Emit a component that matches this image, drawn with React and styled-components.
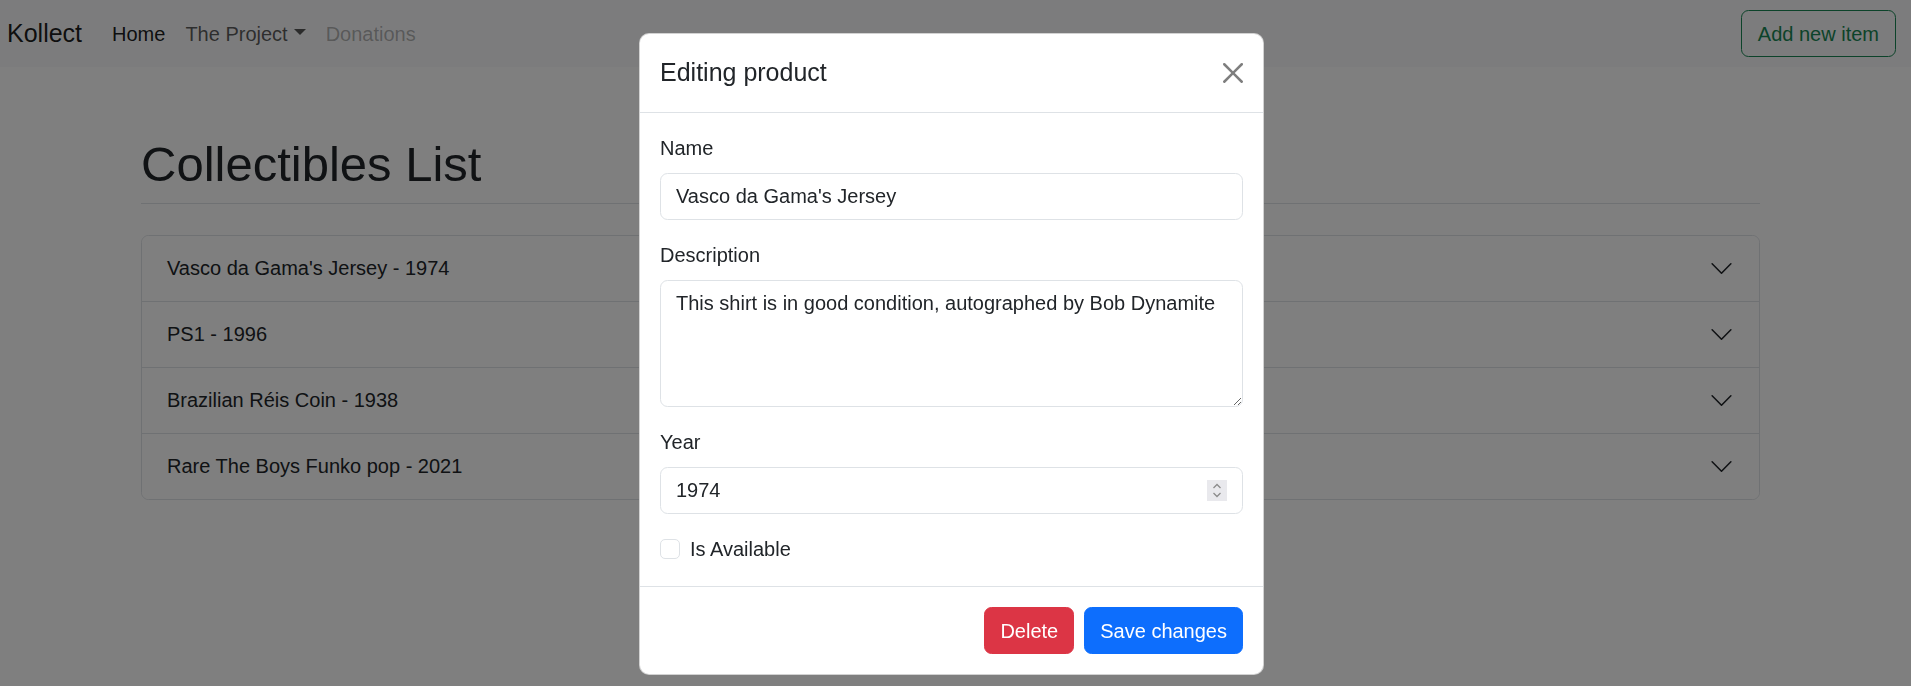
import React from "react";
import styled, { createGlobalStyle } from "styled-components";

const GlobalStyle = createGlobalStyle`
  *, *::before, *::after { box-sizing: border-box; }
  html, body { margin: 0; padding: 0; }
  body {
    font-family: "Liberation Sans", Arial, sans-serif;
    font-size: 20px;
    line-height: 1.5;
    color: #212529;
    background: #fff;
  }
`;

const Page = styled.div`
  min-height: 686px;
`;

const NavBar = styled.nav`
  display: flex;
  align-items: center;
  justify-content: space-between;
  height: 67px;
  padding: 0 15px 0 7px;
  background: #f8f9fa;
`;

const NavLeft = styled.div`
  display: flex;
  align-items: center;
`;

const Brand = styled.a`
  font-size: 25px;
  line-height: 37.5px;
  color: rgba(0, 0, 0, 0.9);
  text-decoration: none;
  margin-right: 20px;
`;

const NavList = styled.ul`
  list-style: none;
  margin: 0;
  padding: 0;
  display: flex;
  align-items: center;
`;

const linkColors = {
  active: "rgba(0, 0, 0, 0.9)",
  normal: "rgba(0, 0, 0, 0.65)",
  disabled: "rgba(0, 0, 0, 0.3)",
};

const NavLink = styled.a`
  display: flex;
  align-items: center;
  padding: 0 10px;
  line-height: 30px;
  color: ${(p) => linkColors[p.$state || "normal"]};
  text-decoration: none;
`;

const Caret = styled.span`
  display: inline-block;
  margin-left: 6px;
  margin-top: -3px;
  border-top: 6px solid currentColor;
  border-left: 6px solid transparent;
  border-right: 6px solid transparent;
`;

const OutlineButton = styled.button`
  font-family: inherit;
  font-size: 20px;
  line-height: 30px;
  padding: 7.5px 16px;
  color: #198754;
  background: transparent;
  border: 1px solid #198754;
  border-radius: 7.5px;
`;

const Main = styled.main`
  padding: 0 151px 0 141px;
`;

const Title = styled.h1`
  margin: 68px 0 0;
  font-size: 49px;
  font-weight: 400;
  line-height: 1.2;
  padding-bottom: 9px;
  border-bottom: 1px solid #dee2e6;
`;

const Accordion = styled.div`
  margin-top: 31px;
  border: 1px solid #dee2e6;
  border-radius: 7.5px;
  overflow: hidden;
`;

const AccordionRow = styled.div`
  display: flex;
  align-items: center;
  justify-content: space-between;
  padding: 17.5px 25px;
  line-height: 30px;
  background: #fff;
  & + & {
    border-top: 1px solid #dee2e6;
  }
`;

const Overlay = styled.div`
  position: fixed;
  inset: 0;
  background: rgba(0, 0, 0, 0.5);
  display: flex;
  justify-content: center;
  align-items: flex-start;
  padding: 33px 8px 0 0;
`;

const Modal = styled.div`
  width: 625px;
  background: #fff;
  border: 1px solid rgba(0, 0, 0, 0.175);
  border-radius: 10px;
`;

const ModalHeader = styled.div`
  display: flex;
  align-items: center;
  justify-content: space-between;
  padding: 20px;
  border-bottom: 1px solid #dee2e6;
`;

const ModalTitle = styled.h5`
  margin: 0;
  font-size: 25px;
  line-height: 1.5;
  font-weight: 400;
`;

const CloseButton = styled.button`
  display: flex;
  width: 20px;
  height: 20px;
  padding: 0;
  border: 0;
  background: none;
  opacity: 0.5;
`;

const ModalBody = styled.div`
  padding: 20px;
`;

const Field = styled.div`
  margin-bottom: 20px;
`;

const Label = styled.label`
  display: block;
  margin-bottom: 10px;
  line-height: 30px;
`;

const TextInput = styled.input`
  display: block;
  width: 100%;
  height: 47px;
  padding: 7.5px 15px;
  font-family: inherit;
  font-size: 20px;
  line-height: 30px;
  color: #212529;
  background: #fff;
  border: 1px solid #dee2e6;
  border-radius: 7.5px;
  outline: none;
`;

const TextArea = styled.textarea`
  display: block;
  width: 100%;
  height: 127px;
  padding: 7.5px 15px;
  font-family: inherit;
  font-size: 20px;
  line-height: 30px;
  color: #212529;
  background: #fff;
  border: 1px solid #dee2e6;
  border-radius: 7.5px;
  outline: none;
  resize: vertical;
`;

const NumberBox = styled.div`
  display: flex;
  align-items: center;
  height: 47px;
  padding: 0 15px;
  border: 1px solid #dee2e6;
  border-radius: 7.5px;
  background: #fff;
`;

const BareInput = styled.input`
  flex: 1;
  min-width: 0;
  padding: 0;
  border: 0;
  outline: none;
  background: transparent;
  font-family: inherit;
  font-size: 20px;
  line-height: 30px;
  color: #212529;
`;

const CheckRow = styled.div`
  display: flex;
  align-items: center;
  gap: 10px;
  min-height: 30px;
  margin-bottom: 2.5px;
`;

const CheckBox = styled.input`
  appearance: none;
  margin: 0;
  width: 20px;
  height: 20px;
  border: 1px solid #dee2e6;
  border-radius: 5px;
  background: #fff;
`;

const ModalFooter = styled.div`
  display: flex;
  justify-content: flex-end;
  gap: 10px;
  padding: 20px;
  border-top: 1px solid #dee2e6;
`;

const btnColors = {
  danger: "#dc3545",
  primary: "#0d6efd",
};

const Button = styled.button`
  font-family: inherit;
  font-size: 20px;
  line-height: 30px;
  padding: 7.5px 15px;
  color: #fff;
  background: ${(p) => btnColors[p.$variant]};
  border: 1px solid ${(p) => btnColors[p.$variant]};
  border-radius: 7.5px;
`;

const Chevron = () => (
  <svg width="25" height="25" viewBox="0 0 16 16" aria-hidden="true">
    <path
      d="M2 5L8 11L14 5"
      fill="none"
      stroke="#212529"
      strokeLinecap="round"
      strokeLinejoin="round"
    />
  </svg>
);

const CloseIcon = () => (
  <svg width="20" height="20" viewBox="0 0 16 16" aria-hidden="true">
    <path
      fill="#000"
      d="M.293.293a1 1 0 0 1 1.414 0L8 6.586 14.293.293a1 1 0 1 1 1.414 1.414L9.414 8l6.293 6.293a1 1 0 0 1-1.414 1.414L8 9.414l-6.293 6.293a1 1 0 0 1-1.414-1.414L6.586 8 .293 1.707a1 1 0 0 1 0-1.414"
    />
  </svg>
);

const Spinner = () => (
  <svg width="20" height="21" viewBox="0 0 20 21" aria-hidden="true">
    <rect x="0" y="0" width="20" height="21" fill="#e9e9ed" />
    <polyline points="6.5,8 10,4.5 13.5,8" fill="none" stroke="#8c8c8c" strokeWidth="1.3" />
    <polyline points="6.5,13 10,16.5 13.5,13" fill="none" stroke="#8c8c8c" strokeWidth="1.3" />
  </svg>
);

const items = [
  "Vasco da Gama's Jersey - 1974",
  "PS1 - 1996",
  "Brazilian Réis Coin - 1938",
  "Rare The Boys Funko pop - 2021",
];

export default function App() {
  return (
    <Page>
      <GlobalStyle />
      <NavBar>
        <NavLeft>
          <Brand href="#">Kollect</Brand>
          <NavList>
            <li>
              <NavLink href="#" $state="active">Home</NavLink>
            </li>
            <li>
              <NavLink href="#">
                The Project
                <Caret />
              </NavLink>
            </li>
            <li>
              <NavLink $state="disabled">Donations</NavLink>
            </li>
          </NavList>
        </NavLeft>
        <OutlineButton type="button">Add new item</OutlineButton>
      </NavBar>
      <Main>
        <Title>Collectibles List</Title>
        <Accordion>
          {items.map((it) => (
            <AccordionRow key={it}>
              <span>{it}</span>
              <Chevron />
            </AccordionRow>
          ))}
        </Accordion>
      </Main>
      <Overlay>
        <Modal role="dialog">
          <ModalHeader>
            <ModalTitle>Editing product</ModalTitle>
            <CloseButton type="button" aria-label="Close">
              <CloseIcon />
            </CloseButton>
          </ModalHeader>
          <ModalBody>
            <Field>
              <Label>Name</Label>
              <TextInput type="text" defaultValue="Vasco da Gama's Jersey" />
            </Field>
            <Field>
              <Label>Description</Label>
              <TextArea defaultValue="This shirt is in good condition, autographed by Bob Dynamite" />
            </Field>
            <Field>
              <Label>Year</Label>
              <NumberBox>
                <BareInput type="text" defaultValue="1974" />
                <Spinner />
              </NumberBox>
            </Field>
            <CheckRow>
              <CheckBox type="checkbox" id="avail" />
              <label htmlFor="avail">Is Available</label>
            </CheckRow>
          </ModalBody>
          <ModalFooter>
            <Button type="button" $variant="danger">Delete</Button>
            <Button type="button" $variant="primary">Save changes</Button>
          </ModalFooter>
        </Modal>
      </Overlay>
    </Page>
  );
}
